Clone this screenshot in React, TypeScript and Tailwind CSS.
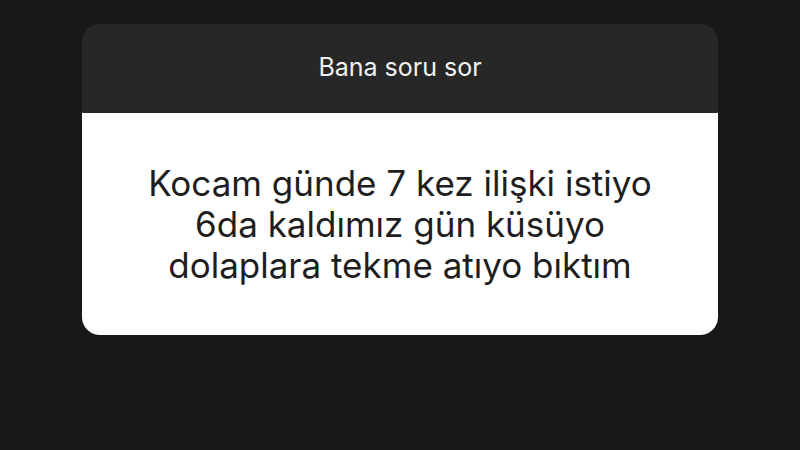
export default function App() {
  return (
    <div className="w-[800px] h-[450px] bg-[#181818] pt-[24px] px-[82px]" style={{ fontFamily: "Inter, 'Noto Sans', sans-serif" }}>
      <div className="w-[636px] rounded-[18px] overflow-hidden">
        <div className="h-[89px] bg-[#272727] flex items-center justify-center pb-[2px]">
          <span className="text-[25px] text-[#f2f2f2]">Bana soru sor</span>
        </div>
        <div className="h-[222px] bg-white flex items-center justify-center">
          <p className="text-[35px] leading-[41px] text-[#1e1e1e] text-center">
            Kocam günde 7 kez ilişki istiyo<br />
            6da kaldımız gün küsüyo<br />
            dolaplara tekme atıyo bıktım
          </p>
        </div>
      </div>
    </div>
  )
}
